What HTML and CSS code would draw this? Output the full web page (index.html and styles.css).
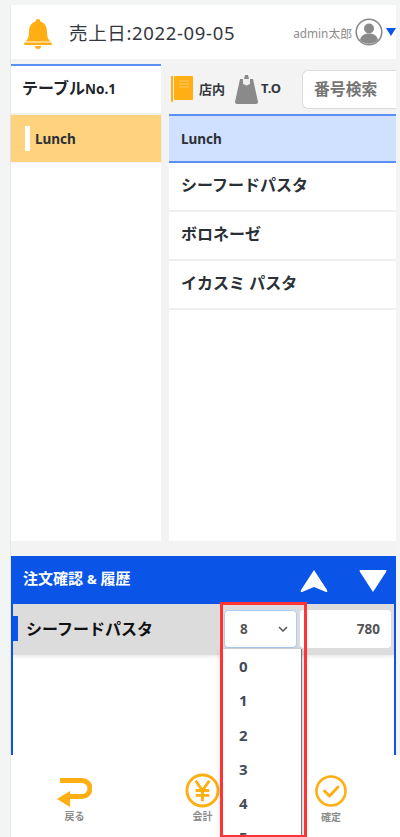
FILE: index.html
```html
<!DOCTYPE html>
<html lang="ja">
<head>
  <meta charset="UTF-8" />
  <meta name="viewport" content="width=device-width,initial-scale=1" />
  <title>注文</title>
  <link rel="stylesheet" href="styles.css">
</head>
<body>
  <div class="app">
    <div class="screen">
      <header class="top">
        <svg class="bell" viewBox="0 0 28 30"><path d="M14 0a2.400 2.400 0 0 1 2.400 2.600C21 4 23 8 23 13c0 5 1.400 7.500 3.500 9.500H1.500C3.600 20.500 5 18 5 13c0-5 2-9 6.600-10.400A2.400 2.400 0 0 1 14 0z" fill="#ffae14"/><rect x="0" y="23.500" width="28" height="2.500" rx="1.200" fill="#ffae14"/><path d="M11 27h6a3 3 0 0 1-6 0z" fill="#ffae14"/></svg>
        <span class="date">売上日:2022-09-05</span>
        <div class="user">
          <span>admin太郎</span>
          <svg class="avatar" viewBox="0 0 28 28"><circle cx="14" cy="14" r="12.800" fill="#fff" stroke="#8a8a8a" stroke-width="1.600"/><circle cx="14" cy="10.500" r="5" fill="#8a8a8a"/><path d="M5 22c1-5 5-6.500 9-6.500s8 1.500 9 6.500a12.500 12.500 0 0 1-18 0z" fill="#8a8a8a"/></svg>
          <svg class="caret" viewBox="0 0 10 8"><path d="M0 0h10L5 8z" fill="#0a55e8"/></svg>
        </div>
      </header>

      <main class="menu">
        <section class="cats">
          <h2 class="table-no">テーブル<small>No.1</small></h2>
          <div class="cat-item"><i></i>Lunch</div>
        </section>
        <section class="items">
          <div class="tools">
            <div class="tool">
              <svg class="note" viewBox="0 0 22 27"><rect x="3" y="0" width="19" height="24" rx="1" fill="#ffae14"/><path d="M0 0h2v25l-1 2-1-2z" fill="#ffae14"/><path d="M8 5h10M8 8h10M8 11h10" stroke="#ffc966" stroke-width="1"/></svg>
              <span>店内</span>
            </div>
            <div class="tool">
              <svg class="bag" viewBox="0 0 23 29"><path d="M5 4h13l5 23q0 2-2 2H2q-2 0-2-2z" fill="#8a8a8a"/><path d="M9 4l1-4h3l1 4z" fill="#8a8a8a"/><path d="M8 4h7v5l-3.500 1.500L8 9z" fill="#f0f0f0"/></svg>
              <span>T.O</span>
            </div>
            <div class="search">番号検索</div>
          </div>
          <div class="item-head">Lunch</div>
          <div class="item">シーフードパスタ</div>
          <div class="item">ボロネーゼ</div>
          <div class="item">イカスミ パスタ</div>
          <div class="item-rest"></div>
        </section>
      </main>

      <section class="order">
        <div class="order-head">
          <h2>注文確認 <small>&amp;</small> 履歴</h2>
          <svg class="arrow" viewBox="0 0 28 24"><path d="M14 1 27 21q1 2-1 2l-12-5-12 5q-2 0-1-2z" fill="#fff"/></svg>
          <svg class="arrow" viewBox="0 0 28 24"><path d="M1 1h26q1 0 0 2L14 23 1 3q-1-2 0-2z" fill="#fff"/></svg>
        </div>
        <div class="order-row">
          <i class="mark"></i>
          <span class="order-name">シーフードパスタ</span>
          <div class="qty">8
            <svg viewBox="0 0 10 6"><path d="M1 1l4 4 4-4" fill="none" stroke="#555" stroke-width="1.500"/></svg>
          </div>
          <div class="price">780</div>
        </div>
      </section>
    </div>

    <nav class="bottom">
      <div class="nav-btn back">
        <svg viewBox="0 0 35 29"><path d="M3 0h22a9.500 9.500 0 0 1 0 21H13v8L0 21l13-8v3h12a4.500 4.500 0 0 0 0-11H3z" fill="#ffae14"/></svg>
        <span>戻る</span>
      </div>
      <div class="nav-btn pay">
        <svg viewBox="0 0 36 36"><circle cx="18" cy="18" r="16" fill="none" stroke="#ffae14" stroke-width="3"/><path d="M11 8l7 10 7-10M18 18v11M11 18h14M11 23h14" fill="none" stroke="#ffae14" stroke-width="3"/></svg>
        <span>会計</span>
      </div>
      <div class="nav-btn ok">
        <svg viewBox="0 0 32 32"><circle cx="16" cy="16" r="14.500" fill="none" stroke="#ffae14" stroke-width="2.600"/><path d="M9.500 16l5 5 8.500-9" fill="none" stroke="#ffae14" stroke-width="3" stroke-linecap="round" stroke-linejoin="round"/></svg>
        <span>確定</span>
      </div>
    </nav>

    <ul class="qty-list">
      <li>0</li><li>1</li><li>2</li><li>3</li><li>4</li><li>5</li>
    </ul>
    <div class="callout"></div>
  </div>
</body>
</html>
```

FILE: styles.css
```css
:root{
  --page:#f3f4f4;
  --orange:#ffae14;
  --blue:#0a55e8;
  --line:#5b8ff5;
  --text:#2b2f36;
}
*{box-sizing:border-box;}
html,body{height:100%;}
body{
  margin:0;
  background:var(--page);
  color:var(--text);
  font-family:"Noto Sans","Noto Sans CJK JP",sans-serif;
  overflow:hidden;
}
h2{margin:0;}
.app{
  position:relative;
  width:400px;
  height:837px;
  padding:5px 0 0 10px;
  overflow:hidden;
}
.screen{
  width:386px;
  height:832px;
  border-left:1px solid #e8e8e8;
  background:#f3f3f3;
}

/* header */
.top{
  height:54px;
  background:#fff;
  display:flex;
  align-items:center;
  padding-left:13px;
  overflow:hidden;
}
.bell{width:28px;height:30px;margin-top:3px;flex:none;}
.date{
  margin-left:17px;
  font-size:18.500px;
  letter-spacing:.65px;
  color:#33373d;
}
.user{
  margin-left:auto;
  display:flex;
  align-items:center;
  font-size:11.800px;
  color:#8c8c8c;
  white-space:nowrap;
}
.avatar{width:28px;height:28px;margin-left:3px;}
.caret{width:10px;height:8px;margin-left:3px;}

/* menu */
.menu{
  display:flex;
  gap:8px;
  height:482px;
}
.cats{
  width:150px;
  margin-top:5px;
  background:#fff;
  border-top:2px solid var(--line);
}
.table-no{
  height:49px;
  padding-left:11px;
  font-size:16px;
  line-height:45px;
  font-weight:700;
  color:#22252a;
  border-bottom:2px solid #f0f0f0;
}
.table-no small{font-size:13.500px;}
.cat-item{
  height:47px;
  background:#ffd27d;
  display:flex;
  align-items:center;
  padding-left:14px;
  font-size:13.500px;
  font-weight:700;
  box-shadow:0 1px 2px rgba(0,0,0,.08);
}
.cat-item i{width:5px;height:25px;background:#fff;margin-right:5px;}
.items{
  width:227px;
  display:flex;
  flex-direction:column;
}
.tools{
  height:55px;
  display:flex;
  align-items:center;
  padding-top:6px;
}
.tool{
  display:flex;
  align-items:center;
  font-size:13px;
  font-weight:700;
  color:#33373d;
}
.tool span{margin-top:-3px;}
.note{width:22px;height:27px;margin-left:2px;margin-right:6px;}
.bag{width:23px;height:29px;margin-left:10px;margin-right:3px;}
.search{
  margin-left:21px;
  flex:1;
  height:39px;
  background:#fff;
  border:1px solid #dcdcdc;
  border-right:0;
  border-radius:6px 0 0 6px;
  padding-left:11px;
  font-size:15.800px;
  font-weight:700;
  line-height:36px;
  color:#757575;
}
.item-head{
  height:49px;
  background:#d0e0ff;
  border-top:2px solid var(--line);
  border-bottom:2px solid var(--line);
  padding-left:12px;
  font-size:13.500px;
  font-weight:700;
  line-height:47px;
}
.item{
  height:49px;
  background:#fff;
  border-bottom:2px solid #efefef;
  padding-left:12px;
  font-size:16px;
  font-weight:700;
  line-height:45px;
}
.item-rest{flex:1;background:#fff;}

/* order panel */
.order{
  margin-top:15px;
  width:385px;
  height:199px;
  background:#fff;
  border:solid var(--blue);
  border-width:0 2px;
}
.order-head{
  margin:0 -2px;
  height:48px;
  background:var(--blue);
  color:#fff;
  display:flex;
  align-items:center;
  padding:0 9px 0 12px;
}
.order-head h2{
  margin-right:auto;
  font-size:15px;
  font-weight:700;
  margin-top:-5px;
}
.order-head small{font-size:13px;}
.arrow{width:28px;height:24px;margin-left:31px;margin-top:2px;}
.order-row{
  height:51px;
  background:#dcdcdc;
  display:flex;
  align-items:center;
  box-shadow:0 2px 3px rgba(0,0,0,.08);
}
.mark{
  width:5px;
  height:25px;
  background:var(--blue);
  margin:-3px 8px 0 0;
}
.order-name{
  width:198px;
  font-size:16px;
  font-weight:700;
  color:#111;
  margin-top:-4px;
}
.qty{
  width:73px;
  height:38px;
  margin-top:-1px;
  background:#fff;
  border:1px solid #a9cdf5;
  border-radius:4px;
  display:flex;
  align-items:center;
  justify-content:space-between;
  padding:0 8px 0 15px;
  font-size:13.500px;
  font-weight:700;
  color:#555;
}
.qty svg{width:10px;height:6px;}
.price{
  width:91px;
  height:38px;
  margin-left:3px;
  margin-top:-1px;
  background:#fff;
  border-radius:4px;
  text-align:right;
  padding-right:11px;
  font-size:13.500px;
  font-weight:700;
  line-height:38px;
  color:#555;
}

/* bottom nav */
.bottom{
  position:absolute;
  left:11px;
  right:0;
  bottom:0;
  height:82px;
  background:#fff;
}
.nav-btn{
  position:absolute;
  display:flex;
  flex-direction:column;
  align-items:center;
  font-size:10px;
  font-weight:700;
  color:#8c8c8c;
}
.nav-btn span{line-height:12px;}
.back{left:46px;top:23px;}
.back svg{width:35px;height:29px;margin-bottom:3px;}
.pay{left:174px;top:18px;}
.pay svg{width:35px;height:35px;margin-bottom:2px;}
.ok{left:304px;top:20px;}
.ok svg{width:32px;height:32px;margin-bottom:4px;}

/* open select, annotation */
.qty-list{
  position:absolute;
  left:222px;
  top:649px;
  width:80px;
  height:188px;
  margin:0;
  padding:0;
  list-style:none;
  background:#fff;
  border-right:1px solid #777;
  box-shadow:0 2px 6px rgba(0,0,0,.3);
  overflow:hidden;
  font-size:15px;
  font-weight:700;
  color:#444b57;
}
.qty-list li{height:34.300px;line-height:34px;padding-left:17px;}
.callout{
  position:absolute;
  left:220px;
  top:602px;
  width:87px;
  height:236px;
  border:3px solid #ff3333;
  pointer-events:none;
}
```
